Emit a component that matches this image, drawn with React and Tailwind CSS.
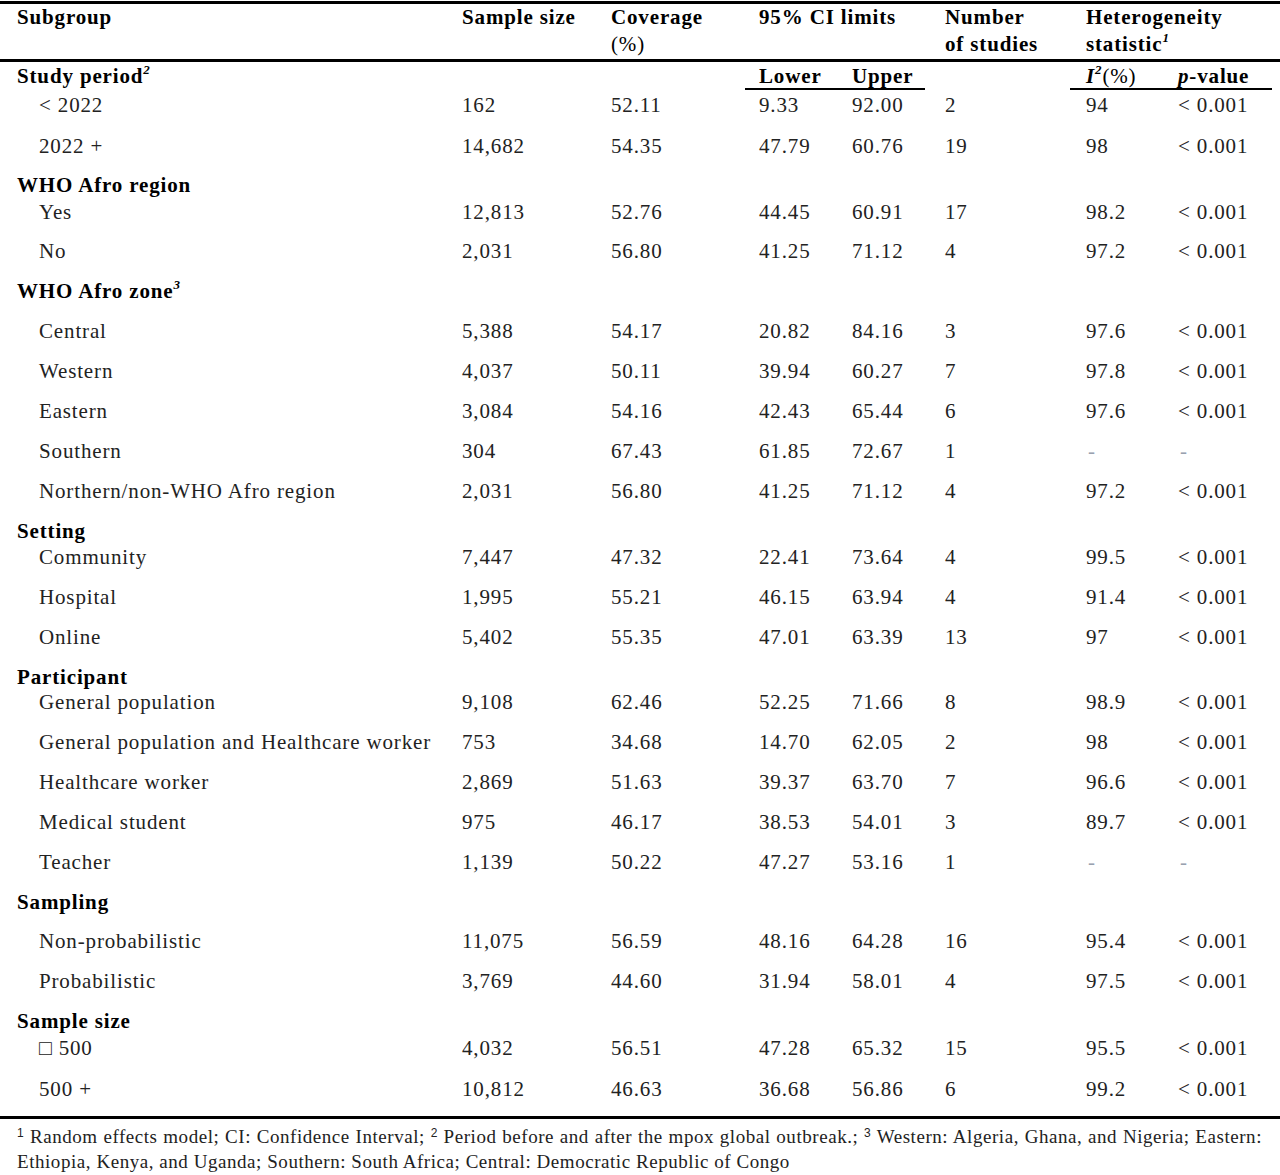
import React from "react";

const COLS =
  "grid grid-cols-[462px_149px_148px_93px_93px_141px_92px_102px]";

const DASH = "-";

// h = distance to the next row's baseline
const rows = [
  { cat: "Study period", sup: "2", h: "h-[29px]", sub: true },
  { label: "< 2022", h: "h-[41px]", v: ["162", "52.11", "9.33", "92.00", "2", "94", "< 0.001"] },
  { label: "2022 +", h: "h-[39px]", v: ["14,682", "54.35", "47.79", "60.76", "19", "98", "< 0.001"] },
  { cat: "WHO Afro region", h: "h-[27px]" },
  { label: "Yes", h: "h-[39px]", v: ["12,813", "52.76", "44.45", "60.91", "17", "98.2", "< 0.001"] },
  { label: "No", h: "h-[40px]", v: ["2,031", "56.80", "41.25", "71.12", "4", "97.2", "< 0.001"] },
  { cat: "WHO Afro zone", sup: "3", h: "h-[40px]" },
  { label: "Central", h: "h-[40px]", v: ["5,388", "54.17", "20.82", "84.16", "3", "97.6", "< 0.001"] },
  { label: "Western", h: "h-[40px]", v: ["4,037", "50.11", "39.94", "60.27", "7", "97.8", "< 0.001"] },
  { label: "Eastern", h: "h-[40px]", v: ["3,084", "54.16", "42.43", "65.44", "6", "97.6", "< 0.001"] },
  { label: "Southern", h: "h-[40px]", v: ["304", "67.43", "61.85", "72.67", "1", DASH, DASH] },
  { label: "Northern/non-WHO Afro region", h: "h-[40px]", v: ["2,031", "56.80", "41.25", "71.12", "4", "97.2", "< 0.001"] },
  { cat: "Setting", h: "h-[26px]" },
  { label: "Community", h: "h-[40px]", v: ["7,447", "47.32", "22.41", "73.64", "4", "99.5", "< 0.001"] },
  { label: "Hospital", h: "h-[40px]", v: ["1,995", "55.21", "46.15", "63.94", "4", "91.4", "< 0.001"] },
  { label: "Online", h: "h-[40px]", v: ["5,402", "55.35", "47.01", "63.39", "13", "97", "< 0.001"] },
  { cat: "Participant", h: "h-[25px]" },
  { label: "General population", h: "h-[40px]", v: ["9,108", "62.46", "52.25", "71.66", "8", "98.9", "< 0.001"] },
  { label: "General population and Healthcare worker", h: "h-[40px]", v: ["753", "34.68", "14.70", "62.05", "2", "98", "< 0.001"] },
  { label: "Healthcare worker", h: "h-[40px]", v: ["2,869", "51.63", "39.37", "63.70", "7", "96.6", "< 0.001"] },
  { label: "Medical student", h: "h-[40px]", v: ["975", "46.17", "38.53", "54.01", "3", "89.7", "< 0.001"] },
  { label: "Teacher", h: "h-[40px]", v: ["1,139", "50.22", "47.27", "53.16", "1", DASH, DASH] },
  { cat: "Sampling", h: "h-[39px]" },
  { label: "Non-probabilistic", h: "h-[40px]", v: ["11,075", "56.59", "48.16", "64.28", "16", "95.4", "< 0.001"] },
  { label: "Probabilistic", h: "h-[40px]", v: ["3,769", "44.60", "31.94", "58.01", "4", "97.5", "< 0.001"] },
  { cat: "Sample size", h: "h-[27px]" },
  { label: "\u25A1 500", h: "h-[41px]", v: ["4,032", "56.51", "47.28", "65.32", "15", "95.5", "< 0.001"] },
  { label: "500 +", h: "h-[39px]", v: ["10,812", "46.63", "36.68", "56.86", "6", "99.2", "< 0.001"] },
];

function Sup({ children }) {
  return (
    <sup className="italic text-[13px] relative top-[-1px] align-super leading-none">
      {children}
    </sup>
  );
}

function CategoryRow({ row }) {
  return (
    <div className={`${COLS} ${row.h}`}>
      <div className="pl-[17px] font-bold text-black">
        {row.cat}
        {row.sup && <Sup>{row.sup}</Sup>}
      </div>
      {row.sub && (
        <>
          <div />
          <div />
          <div className="col-span-2 ml-[-14px] mr-[20px] h-[26px] border-b-2 border-black font-bold text-black flex">
            <span className="pl-[14px] w-[107px]">Lower</span>
            <span>Upper</span>
          </div>
          <div />
          <div className="col-span-2 ml-[-16px] mr-[8px] h-[26px] border-b-2 border-black font-bold text-black flex">
            <span className="pl-[16px] w-[108px]">
              <i>I</i>
              <Sup>2</Sup>
              <span className="font-normal">(%)</span>
            </span>
            <span>
              <i>p</i>-value
            </span>
          </div>
        </>
      )}
    </div>
  );
}

function DataRow({ row }) {
  return (
    <div className={`${COLS} ${row.h}`}>
      <div className="pl-[39px]">{row.label}</div>
      {row.v.map((val, i) => (
        <div key={i} className={val === DASH ? "text-gray-400 pl-[2px]" : ""}>
          {val}
        </div>
      ))}
    </div>
  );
}

export default function App() {
  return (
    <div className="w-[1280px] h-[1175px] bg-white font-['Liberation_Serif',serif] text-[21px] tracking-[0.85px] text-[#222] overflow-hidden">
      <div className="mt-[1px] border-t-[3px] border-black">
        {/* header */}
        <div className={`${COLS} h-[58px] leading-[27px] font-bold text-black border-b-[3px] border-black`}>
          <div className="pl-[17px]">Subgroup</div>
          <div>Sample size</div>
          <div>
            Coverage
            <br />
            <span className="font-normal">(%)</span>
          </div>
          <div className="col-span-2">95% CI limits</div>
          <div>
            Number
            <br />
            of studies
          </div>
          <div className="col-span-2">
            Heterogeneity
            <br />
            statistic<Sup>1</Sup>
          </div>
        </div>

        {/* body */}
        <div className="pt-[2px] leading-[24px] border-b-[3px] border-black">
          {rows.map((row, i) =>
            row.cat ? <CategoryRow key={i} row={row} /> : <DataRow key={i} row={row} />
          )}
        </div>

        {/* footnote */}
        <div className="pl-[17px] pr-[18px] pt-[5px] text-[19px] leading-[25px] tracking-[0.55px]">
          <div className="text-justify [text-align-last:justify]">
            <sup className="font-['Liberation_Sans',sans-serif] text-[12px]">1</sup> Random effects
            model; CI: Confidence Interval;{" "}
            <sup className="font-['Liberation_Sans',sans-serif] text-[12px]">2</sup> Period before and
            after the mpox global outbreak.;{" "}
            <sup className="font-['Liberation_Sans',sans-serif] text-[12px]">3</sup> Western: Algeria,
            Ghana, and Nigeria; Eastern:
          </div>
          <div>
            Ethiopia, Kenya, and Uganda; Southern: South Africa; Central: Democratic Republic of Congo
          </div>
        </div>
      </div>
    </div>
  );
}
